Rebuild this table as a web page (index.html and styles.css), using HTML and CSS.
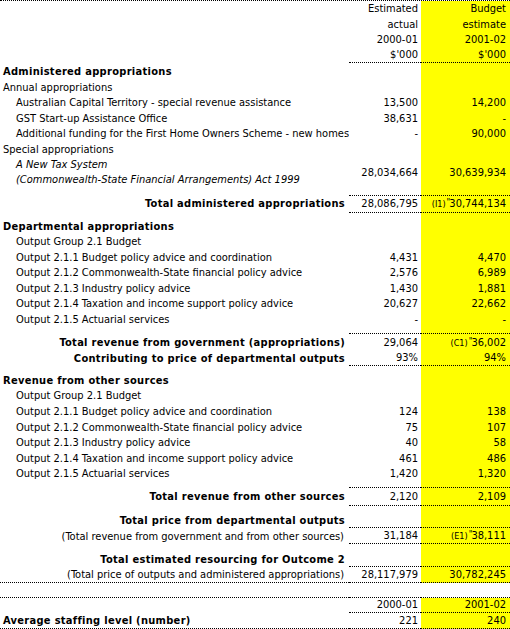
FILE: index.html
```html
<!DOCTYPE html>
<html lang="en">
<head>
    <meta charset="UTF-8">
    <meta name="viewport" content="width=device-width, initial-scale=1.0">
    <title>Outcome 2 resourcing</title>
    <link rel="stylesheet" href="styles.css">
</head>
<body>
    <table class="resourcing">
        <colgroup>
            <col class="col-label">
            <col class="col-actual">
            <col class="col-budget">
        </colgroup>
        <tr class="h15"><td></td><td class="num">Estimated</td><td class="num budget">Budget</td></tr>
        <tr class="h16"><td></td><td class="num">actual</td><td class="num budget">estimate</td></tr>
        <tr class="h15"><td></td><td class="num">2000-01</td><td class="num budget">2001-02</td></tr>
        <tr class="h16 rule-below"><td></td><td class="num">$'000</td><td class="num budget">$'000</td></tr>

        <!-- Administered -->
        <tr class="h16"><td class="head">Administered appropriations</td><td></td><td class="budget"></td></tr>
        <tr class="h16"><td>Annual appropriations</td><td></td><td class="budget"></td></tr>
        <tr class="h15"><td class="indent">Australian Capital Territory - special revenue assistance</td><td class="num">13,500</td><td class="num budget">14,200</td></tr>
        <tr class="h16"><td class="indent">GST Start-up Assistance Office</td><td class="num">38,631</td><td class="num budget">-</td></tr>
        <tr class="h15"><td class="indent">Additional funding for the First Home Owners Scheme - new homes</td><td class="num">-</td><td class="num budget">90,000</td></tr>
        <tr class="h16"><td>Special appropriations</td><td></td><td class="budget"></td></tr>
        <tr class="h31 middle"><td class="indent act">A New Tax System<br>(Commonwealth-State Financial Arrangements) Act 1999</td><td class="num">28,034,664</td><td class="num budget">30,639,934</td></tr>
        <tr class="h7"><td></td><td></td><td class="budget"></td></tr>
        <tr class="h18 middle rule-above rule-below"><td class="total">Total administered appropriations</td><td class="num">28,086,795</td><td class="num budget"><span class="note">(I1)<span class="tick">"</span></span>30,744,134</td></tr>
        <tr class="h5"><td></td><td></td><td class="budget"></td></tr>

        <!-- Departmental -->
        <tr class="h16"><td class="head">Departmental appropriations</td><td></td><td class="budget"></td></tr>
        <tr class="h15"><td class="indent">Output Group 2.1 Budget</td><td></td><td class="budget"></td></tr>
        <tr class="h16"><td class="indent">Output 2.1.1 Budget policy advice and coordination</td><td class="num">4,431</td><td class="num budget">4,470</td></tr>
        <tr class="h15"><td class="indent">Output 2.1.2 Commonwealth-State financial policy advice</td><td class="num">2,576</td><td class="num budget">6,989</td></tr>
        <tr class="h16"><td class="indent">Output 2.1.3 Industry policy advice</td><td class="num">1,430</td><td class="num budget">1,881</td></tr>
        <tr class="h15"><td class="indent">Output 2.1.4 Taxation and income support policy advice</td><td class="num">20,627</td><td class="num budget">22,662</td></tr>
        <tr class="h16"><td class="indent">Output 2.1.5 Actuarial services</td><td class="num">-</td><td class="num budget">-</td></tr>
        <tr class="h6"><td></td><td></td><td class="budget"></td></tr>
        <tr class="h17 rule-above"><td class="total">Total revenue from government (appropriations)</td><td class="num">29,064</td><td class="num budget"><span class="note">(C1)<span class="tick">"</span></span>36,002</td></tr>
        <tr class="h16 rule-below"><td class="total">Contributing to price of departmental outputs</td><td class="num">93%</td><td class="num budget">94%</td></tr>
        <tr class="h6"><td></td><td></td><td class="budget"></td></tr>

        <!-- Other sources -->
        <tr class="h16"><td class="head">Revenue from other sources</td><td></td><td class="budget"></td></tr>
        <tr class="h15"><td class="indent">Output Group 2.1 Budget</td><td></td><td class="budget"></td></tr>
        <tr class="h16"><td class="indent">Output 2.1.1 Budget policy advice and coordination</td><td class="num">124</td><td class="num budget">138</td></tr>
        <tr class="h16"><td class="indent">Output 2.1.2 Commonwealth-State financial policy advice</td><td class="num">75</td><td class="num budget">107</td></tr>
        <tr class="h15"><td class="indent">Output 2.1.3 Industry policy advice</td><td class="num">40</td><td class="num budget">58</td></tr>
        <tr class="h16"><td class="indent">Output 2.1.4 Taxation and income support policy advice</td><td class="num">461</td><td class="num budget">486</td></tr>
        <tr class="h15"><td class="indent">Output 2.1.5 Actuarial services</td><td class="num">1,420</td><td class="num budget">1,320</td></tr>
        <tr class="h6"><td></td><td></td><td class="budget"></td></tr>
        <tr class="h19 middle rule-above rule-below"><td class="total">Total revenue from other sources</td><td class="num">2,120</td><td class="num budget">2,109</td></tr>
        <tr class="h6"><td></td><td></td><td class="budget"></td></tr>

        <!-- Totals -->
        <tr class="h16 rule-below"><td class="total">Total price from departmental outputs</td><td class="num"></td><td class="num budget"></td></tr>
        <tr class="h16 rule-below"><td class="sub">(Total revenue from government and from other sources)</td><td class="num">31,184</td><td class="num budget"><span class="note">(E1)<span class="tick">"</span></span>38,111</td></tr>
        <tr class="h7"><td></td><td></td><td class="budget"></td></tr>
        <tr class="h16 rule-below"><td class="total">Total estimated resourcing for Outcome 2</td><td class="num"></td><td class="num budget"></td></tr>
        <tr class="h16 rule-full"><td class="sub">(Total price of outputs and administered appropriations)</td><td class="num">28,117,979</td><td class="num budget">30,782,245</td></tr>
        <tr class="h15 rule-full"><td></td><td></td><td></td></tr>

        <!-- Staffing -->
        <tr class="h15 rule-below"><td></td><td class="num">2000-01</td><td class="num budget">2001-02</td></tr>
        <tr class="h16 rule-full"><td class="head">Average staffing level (number)</td><td class="num">221</td><td class="num budget">240</td></tr>
    </table>
</body>
</html>
```

FILE: styles.css
```css
body {
    margin: 0;
    background-color: #fff;
    color: #000;
    font-family: "DejaVu Sans Condensed", "DejaVu Sans", sans-serif;
    font-size: 11px;
}

.resourcing {
    width: 510px;
    table-layout: fixed;
    border-collapse: separate;
    border-spacing: 0;
    border-top: 1px dotted #000;
}

.col-label {
    width: 349px;
}

.col-actual {
    width: 72px;
}

.col-budget {
    width: 89px;
}

.resourcing td {
    padding: 0 3px 1px 3px;
    line-height: 13px;
    vertical-align: bottom;
    white-space: nowrap;
    overflow: hidden;
}

.resourcing td.budget {
    background-color: #ffff00;
    padding-right: 4px;
}

.num {
    text-align: right;
}

.indent {
    padding-left: 16px !important;
}

.head {
    font-weight: bold;
    letter-spacing: 0.3px;
}

.total {
    text-align: right;
    font-weight: bold;
    letter-spacing: 0.3px;
    padding-right: 4px !important;
}

.sub {
    text-align: right;
    padding-right: 5px !important;
}

.act {
    font-style: italic;
    line-height: 15px !important;
}

.middle td {
    vertical-align: middle;
}

.middle td.act {
    vertical-align: bottom;
}

/* dotted rules */
.rule-below td + td {
    border-bottom: 1px dotted #000;
}

.rule-above td + td {
    border-top: 1px dotted #000;
}

.rule-full td {
    border-bottom: 1px dotted #000;
}

/* footnote markers in the budget column */
.note {
    font-size: 9px;
    line-height: 0;
    letter-spacing: 0;
}

.tick {
    line-height: 0;
    vertical-align: 2px;
    margin-left: 1px;
    letter-spacing: -1px;
}

/* row heights */
.h5 { height: 5px; }
.h6 { height: 6px; }
.h7 { height: 7px; }
.h15 { height: 15px; }
.h16 { height: 16px; }
.h17 { height: 17px; }
.h18 { height: 18px; }
.h19 { height: 19px; }
.h31 { height: 31px; }
```
